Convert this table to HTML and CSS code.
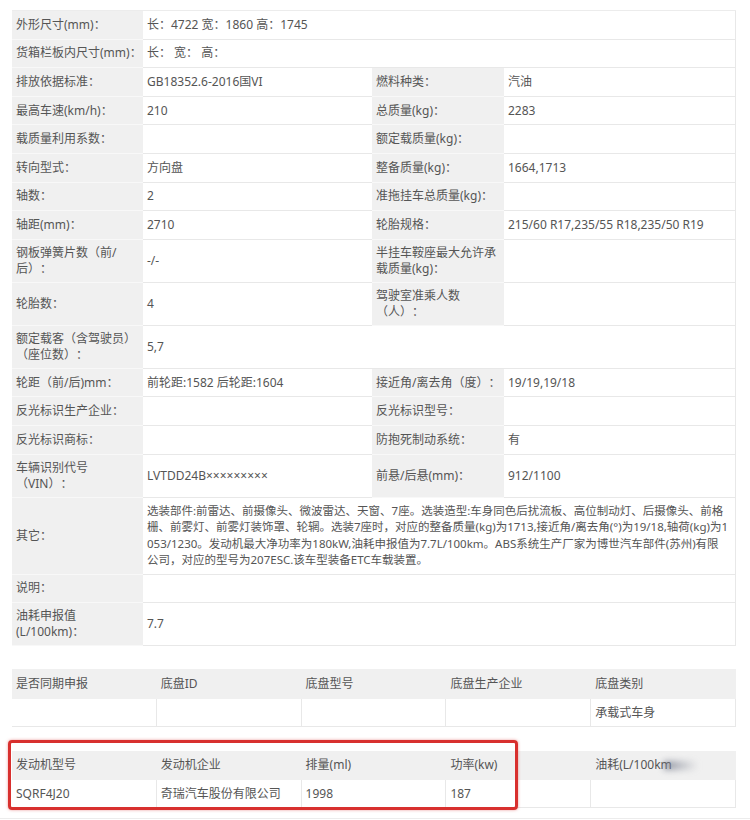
FILE: index.html
```html
<!DOCTYPE html>
<html lang="zh-cn">
<head>
  <meta charset="UTF-8">
  <meta name="viewport" content="width=device-width, initial-scale=1.0">
  <title>车辆参数</title>
  <link rel="stylesheet" href="styles.css">
</head>
<body>

<div class="page">
  <!-- 主要参数 -->
  <table class="spec">
    <colgroup>
      <col class="w-lab1">
      <col class="w-val1">
      <col class="w-lab2">
      <col class="w-val2">
    </colgroup>
    <tr><td class="lab">外形尺寸(mm)：</td><td colspan="3" class="end">长：4722 宽：1860 高：1745</td></tr>
    <tr><td class="lab nw">货箱栏板内尺寸(mm)：</td><td colspan="3" class="end">长： 宽： 高：</td></tr>
    <tr><td class="lab">排放依据标准：</td><td>GB18352.6-2016国VI</td><td class="lab">燃料种类：</td><td class="end">汽油</td></tr>
    <tr><td class="lab">最高车速(km/h)：</td><td>210</td><td class="lab">总质量(kg)：</td><td class="end">2283</td></tr>
    <tr><td class="lab">载质量利用系数：</td><td></td><td class="lab">额定载质量(kg)：</td><td class="end"></td></tr>
    <tr><td class="lab">转向型式：</td><td>方向盘</td><td class="lab">整备质量(kg)：</td><td class="end">1664,1713</td></tr>
    <tr><td class="lab">轴数：</td><td>2</td><td class="lab">准拖挂车总质量(kg)：</td><td class="end"></td></tr>
    <tr><td class="lab">轴距(mm)：</td><td>2710</td><td class="lab">轮胎规格：</td><td class="end">215/60 R17,235/55 R18,235/50 R19</td></tr>
    <tr class="two"><td class="lab">钢板弹簧片数（前/后）：</td><td>-/-</td><td class="lab">半挂车鞍座最大允许承载质量(kg)：</td><td class="end"></td></tr>
    <tr class="two"><td class="lab">轮胎数：</td><td>4</td><td class="lab">驾驶室准乘人数（人）：</td><td class="end"></td></tr>
    <tr class="two"><td class="lab">额定载客（含驾驶员）（座位数）：</td><td colspan="3" class="end">5,7</td></tr>
    <tr><td class="lab">轮距（前/后)mm：</td><td>前轮距:1582 后轮距:1604</td><td class="lab">接近角/离去角（度）：</td><td class="end">19/19,19/18</td></tr>
    <tr><td class="lab">反光标识生产企业：</td><td></td><td class="lab">反光标识型号：</td><td class="end"></td></tr>
    <tr><td class="lab">反光标识商标：</td><td></td><td class="lab">防抱死制动系统：</td><td class="end">有</td></tr>
    <tr class="two"><td class="lab">车辆识别代号（VIN）：</td><td>LVTDD24B×××××××××</td><td class="lab">前悬/后悬(mm)：</td><td class="end">912/1100</td></tr>
    <tr class="four">
      <td class="lab">其它：</td>
      <td colspan="3" class="end note">选装部件:前雷达、前摄像头、微波雷达、天窗、7座。选装造型:车身同色后扰流板、高位制动灯、后摄像头、前格<br>栅、前雾灯、前雾灯装饰罩、轮辋。选装7座时，对应的整备质量(kg)为1713,接近角/离去角(°)为19/18,轴荷(kg)为1<br>053/1230。发动机最大净功率为180kW,油耗申报值为7.7L/100km。ABS系统生产厂家为博世汽车部件(苏州)有限<br>公司，对应的型号为207ESC.该车型装备ETC车载装置。</td>
    </tr>
    <tr><td class="lab">说明：</td><td colspan="3" class="end"></td></tr>
    <tr class="two"><td class="lab">油耗申报值(L/100km)：</td><td colspan="3" class="end">7.7</td></tr>
  </table>

  <!-- 底盘 -->
  <table class="grid chassis">
    <tr class="head"><td>是否同期申报</td><td>底盘ID</td><td>底盘型号</td><td>底盘生产企业</td><td class="end">底盘类别</td></tr>
    <tr><td></td><td></td><td></td><td></td><td class="end">承载式车身</td></tr>
  </table>

  <!-- 发动机 -->
  <div class="engine-wrap">
    <table class="grid engine">
      <tr class="head"><td>发动机型号</td><td>发动机企业</td><td>排量(ml)</td><td>功率(kw)</td><td class="end">油耗(L/100km<span class="smear"></span></td></tr>
      <tr><td>SQRF4J20</td><td>奇瑞汽车股份有限公司</td><td>1998</td><td>187</td><td class="end"></td></tr>
    </table>
    <div class="mark"></div>
  </div>
</div>
<div class="foot-line"></div>

</body>
</html>
```

FILE: styles.css
```css
body {
  margin: 0;
  background-color: #fff;
  font-family: "Noto Sans", "Noto Sans CJK SC", sans-serif;
  font-size: 12px;
  color: #555;
  text-spacing-trim: space-all;
}
.page {
  padding: 10px 14px 0 12px;
}
table {
  width: 724px;
  table-layout: fixed;
  border-collapse: separate;
  border-spacing: 0;
}
td {
  padding: 3px 2px 3px 4px;
  line-height: 16px;
  vertical-align: middle;
  border-bottom: 1px solid #e8e8e8;
}
td.end {
  border-right: 1px solid #e8e8e8;
}
.spec {
  border-top: 1px solid #ececec;
}
.spec tr {
  height: 28.6px;
}
.spec tr.two {
  height: 43px;
}
.spec tr.four {
  height: 77px;
}
.w-lab1 { width: 131px; }
.w-val1 { width: 229px; }
.w-lab2 { width: 132px; }
.w-val2 { width: 232px; }
.lab {
  background-color: #f0f0f0;
  border-bottom-color: #f8f8f8;
}
.nw {
  white-space: nowrap;
}
.note {
  white-space: nowrap;
  font-size: 11.5px;
  line-height: 16.5px;
}
.grid {
  margin-top: 23px;
}
.grid td {
  border-right: 1px solid #e8e8e8;
}
.grid tr {
  height: 28px;
}
.grid tr.head {
  height: 30px;
}
.grid .head td {
  background-color: #f0f0f0;
  border-right-color: #f0f0f0;
  border-bottom-color: #f0f0f0;
}
.engine-wrap {
  position: relative;
}
.engine {
  margin-top: 24px;
}
.engine tr.head {
  height: 29px;
}
.smear {
  display: inline-block;
  width: 34px;
  height: 9px;
  margin-left: -8px;
  vertical-align: -1px;
  background: linear-gradient(to right, rgba(120, 125, 140, 0.8), rgba(200, 205, 215, 0));
  filter: blur(3px);
}
.mark {
  position: absolute;
  left: -4px;
  top: -11px;
  width: 504px;
  height: 64px;
  border: 3px solid #d8302e;
  border-radius: 4px;
  box-shadow: 0 0 3px rgba(216, 48, 46, 0.5);
}
.foot-line {
  margin-top: 10px;
  border-top: 1px solid #ececec;
}
```
